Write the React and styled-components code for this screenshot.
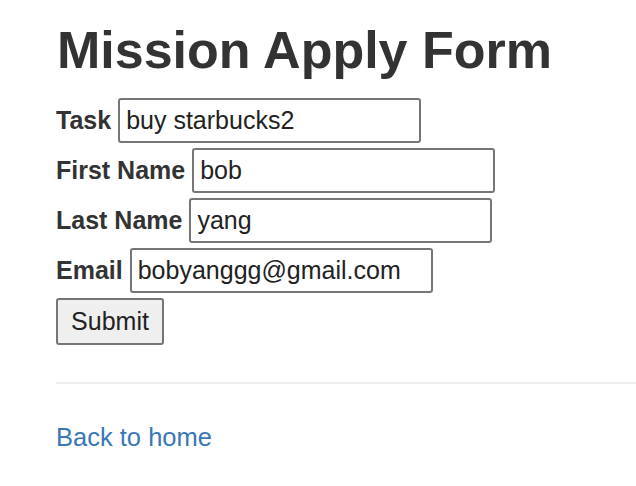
import React from "react";
import styled, { createGlobalStyle } from "styled-components";

const GlobalStyle = createGlobalStyle`
  body {
    margin: 0;
    background: #fff;
    color: #333;
    font-family: "Liberation Sans", Arial, sans-serif;
    font-size: 25px;
    line-height: 1.4;
  }
`;

const FIELDS = [
  { label: "Task", value: "buy starbucks2" },
  { label: "First Name", value: "bob" },
  { label: "Last Name", value: "yang" },
  { label: "Email", value: "bobyanggg@gmail.com" },
];

export default function App() {
  return (
    <>
      <GlobalStyle />
      <Page>
        <Title>Mission Apply Form</Title>
        <Form onSubmit={(e) => e.preventDefault()}>
          {FIELDS.map((f) => (
            <Row key={f.label}>
              <Label>{f.label}</Label>
              <Input defaultValue={f.value} />
            </Row>
          ))}
          <SubmitButton type="submit">Submit</SubmitButton>
        </Form>
        <Divider />
        <HomeLink href="#">Back to home</HomeLink>
      </Page>
    </>
  );
}

const Page = styled.div`
  padding-left: 56px;
`;

const Title = styled.h1`
  margin: 22px 0 19px 1px;
  font-size: 52px;
  font-weight: 700;
  line-height: 1.1;
  color: #333;
`;

const Form = styled.form`
  display: flex;
  flex-direction: column;
  align-items: flex-start;
  gap: 5px;
`;

const Row = styled.div`
  display: flex;
  align-items: baseline;
  gap: 7px;
`;

const Label = styled.label`
  font-weight: 700;
  color: #333;
`;

const Input = styled.input`
  box-sizing: border-box;
  width: 303px;
  height: 45px;
  padding: 0 6px;
  border: 2px solid #767676;
  border-radius: 3px;
  font-family: "Liberation Sans", Arial, sans-serif;
  font-size: 25px;
  color: #222;
  background: #fff;
  outline: none;
`;

const SubmitButton = styled.button`
  box-sizing: border-box;
  width: 108px;
  height: 47px;
  padding: 0;
  border: 2px solid #767676;
  border-radius: 3px;
  background: #efefef;
  font-family: "Liberation Sans", Arial, sans-serif;
  font-size: 25px;
  color: #222;
`;

const Divider = styled.hr`
  margin: 37px 0 36px;
  border: 0;
  border-top: 2px solid #eee;
`;

const HomeLink = styled.a`
  display: inline-block;
  font-size: 25.5px;
  color: #3a76b6;
  text-decoration: none;
`;
